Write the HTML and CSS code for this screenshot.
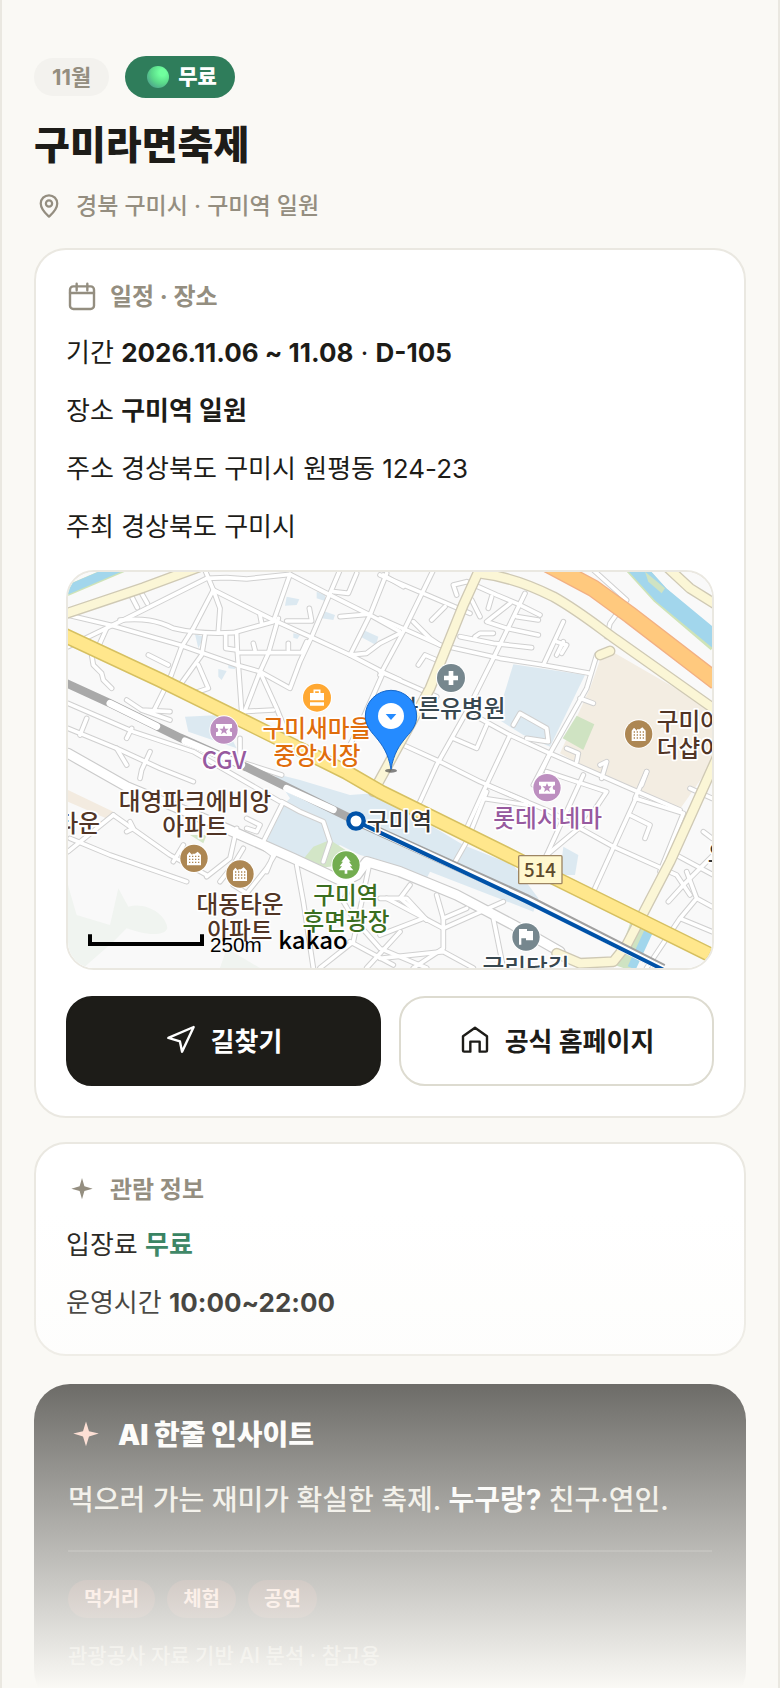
FILE: index.html
```html
<!DOCTYPE html>
<html lang="ko">
<head>
  <meta charset="UTF-8">
  <title>구미라면축제</title>
  <meta name="viewport" content="width=device-width, initial-scale=1.0">
  <link rel="stylesheet" href="styles.css">
</head>
<body>
  <main class="frame">
    <header class="head">
      <div class="badges">
        <span class="badge-month">11월</span>
        <span class="badge-free"><i class="dot"></i>무료</span>
      </div>
      <h1>구미라면축제</h1>
      <p class="place">
        <svg class="icon" viewBox="0 0 24 24"><path d="M12 20.5c-1.600-1.500-6.600-5.600-6.600-10.500a6.600 6.600 0 0 1 13.200 0c0 4.900-5 9-6.600 10.500z"/><circle cx="12" cy="10" r="2.500"/></svg>
        경북 구미시 · 구미역 일원
      </p>
    </header>

    <section class="card">
      <h2 class="schedule">
        <svg class="icon" viewBox="0 0 24 24"><rect x="3" y="4" width="18" height="17" rx="2.500"/><path d="M3 9h18M8 2v5M16 2v5"/></svg>
        일정 · 장소
      </h2>
      <div class="rows">
        <p>기간 <b>2026.11.06 ~ 11.08</b> · <b>D-105</b></p>
        <p>장소 <b>구미역 일원</b></p>
        <p>주소 경상북도 구미시 원평동 124-23</p>
        <p>주최 경상북도 구미시</p>
      </div>

      <div class="map">
        <svg viewBox="24 21 1932 1188" preserveAspectRatio="xMidYMid slice" role="img" aria-label="구미역 주변 지도">
          <defs>
            <g id="lanes">
              <path d="M24 245L190 165L440 40L500 38L560 42L690 28"/>
              <path d="M24 150L150 180L360 240L530 300L600 320L690 370L720 290L755 215L840 15"/>
              <path d="M435 15L460 75L400 190L365 245L330 340L280 440"/>
              <path d="M460 75L640 165L750 215L870 270L970 322L1020 345"/>
              <path d="M460 75L480 130L475 200"/>
              <path d="M180 165C250 160 290 165 340 190C400 205 480 205 520 203L640 170L690 28L810 90L930 150L1020 200"/>
              <path d="M530 205L532 260L545 440L640 435M532 263H725L740 230"/>
              <path d="M140 190L115 245M95 270L100 300L125 325L130 345L155 370"/>
              <path d="M435 210L425 270L360 360M415 300L445 370L400 385"/>
              <path d="M655 160L625 265L600 320L550 450M600 320L650 430L690 530"/>
              <path d="M980 25L930 150L870 270L920 265L960 235L1020 205M840 155L920 148"/>
              <path d="M970 322L900 480L860 560M970 30L1030 65M685 255V235M585 255L580 235M680 168H755L748 130"/>
              <path d="M215 95L232 128M245 85L262 115M265 270L325 300M497 210V250L530 255M600 150L605 175"/>
              <path d="M200 405L245 435L330 465M245 435L330 440M820 80L865 85L890 25"/>
              <path d="M24 415L220 500L400 560L660 710M80 460L60 510M215 490L200 520M24 490L170 550L300 610L400 650"/>
              <path d="M170 550L200 600M270 560L245 615L240 640M540 520L540 590L665 630"/>
              <!-- north-east blocks -->
              <path d="M960 30L1090 85L1230 145M1120 15L1030 200L960 330M960 160L1140 240L1320 280L1450 300L1590 325"/>
              <path d="M1395 85L1300 280L1220 440L1130 600L1080 710M1510 170L1450 300"/>
              <path d="M1190 90L1180 60L1220 50L1310 90L1370 115L1440 150M1350 115L1280 170L1340 190L1435 210"/>
              <path d="M1370 155L1435 165M1200 215L1300 235L1415 248M1245 215L1260 205H1300M1285 130L1295 95M1260 155L1235 105"/>
              <path d="M1115 165L1155 125M960 320L1130 395M1250 455L1350 510L1470 565L1710 670L1860 735M1030 540L1140 590L1260 650L1400 710"/>
              <path d="M1350 510L1270 680L1220 790M1470 565L1420 660M1180 520L1250 550L1280 480"/>
              <path d="M1610 270L1580 370L1470 565L1430 650M1560 400L1600 415M1600 15L1700 105L1650 175L1640 215"/>
              <path d="M1505 265L1520 240L1490 230M1490 270L1510 230M1360 480L1380 445L1460 490L1465 530L1400 520"/>
              <path d="M1520 550L1555 565L1550 590M1620 600L1640 590L1625 640M1760 620L1745 660M1075 300L1095 270L1130 285M1060 170L1110 220L1140 240"/>
              <!-- south-east blocks -->
              <path d="M1280 680L1220 830L1180 900M1460 620L1640 680L1580 770L1460 870M1270 700L1400 720"/>
              <path d="M1280 660L1470 740L1660 845L1850 930L1890 990M1570 630L1460 870M1730 695L1600 980"/>
              <path d="M1760 620L1725 700L1870 745M1710 750L1770 780L1755 820M1870 745L1800 920M1830 860L1960 930"/>
              <path d="M1960 870L1875 955L1825 1010M1880 920L1910 1000L1860 1060L1760 1209M1910 1000L1956 1025M1860 1060L1956 1100M1890 670L1956 700M1930 800L1956 820"/>
              <!-- south of the station -->
              <path d="M665 710L720 740L790 770L810 830L790 890M665 720L610 830M530 790L510 880L440 935"/>
              <path d="M650 860L620 910L560 985L520 960M600 840L640 870L620 920M160 750L330 870L440 930"/>
              <path d="M370 840L340 890M550 850L520 900L480 950M24 860L160 750M30 820L150 870L380 950M210 770L220 790L200 800"/>
              <path d="M710 900L730 1010L760 1209M880 940L850 1010L880 1060L960 1150L1100 1209M960 1000L1040 1000L1100 1065"/>
              <path d="M930 890L880 1130L780 1209M1020 1100L920 1209M870 1130L1000 1200M980 1000L1150 1090L1330 1010"/>
              <path d="M1050 960L1020 1000L1100 1065M1130 990L1150 1060V1150L1060 1209M960 1110L1090 1060M1300 1060L1330 1209"/>
              <path d="M960 1180L1150 1160L1240 1209M1220 1030L1150 1060M560 760L600 780L590 800L560 790"/>
            </g>
            <g id="avenues">
              <path d="M24 565L200 665L440 765L700 880L850 950"/>
              <path d="M850 950L890 930L920 890L1020 920L1190 990L1360 1080L1500 1160"/>
            </g>
            <g id="local">
              <path d="M0 152L250 68L420 5"/>
              <path d="M1260 10L1210 120L1110 370L940 680"/>
              <path d="M1260 25C1350 35 1430 70 1480 95C1560 140 1620 190 1670 225L1960 430"/>
              <path d="M1820 5L1890 70L1970 120"/>
              <path d="M1970 580L1830 890L1700 1140L1660 1190L1560 1195L1490 1165"/>
              <path d="M1620 270L1650 258"/>
            </g>
            <g id="building">
              <circle r="44" fill="#fff"/><circle r="41" fill="#ad8753"/>
              <path d="M-21 21V-10L-14-19L-5-10V-14H3L11-20L21-10V21Z" fill="#fff"/>
              <path d="M-15-6H17M-15 3H17M-15 12H17" stroke="#ad8753" stroke-width="4" stroke-dasharray="4 5"/>
            </g>
            <g id="cinema">
              <circle r="44" fill="#fff"/><circle r="41" fill="#bd8fc0"/>
              <path d="M-24-18H24V-7A7 7 0 0 0 24 7V18H-24V7A7 7 0 0 0-24-7Z" fill="#fff"/>
              <path d="M0-14L4-4L14-4L6 3L9 13L0 7L-9 13L-6 3L-14-4L-4-4Z" fill="#bd8fc0"/>
            </g>
          </defs>

          <rect x="0" y="0" width="1980" height="1230" fill="#f9f9f9"/>

          <!-- parks, water, blocks -->
          <path d="M24 960L50 1050L150 1080L175 970L205 1025C260 1010 320 1050 322 1090C310 1120 240 1105 200 1090L160 1130L70 1209H24Z" fill="#f0f4f0"/>
          <path d="M500 1150L600 1209H480Z" fill="#f0f4f0"/>
          <path d="M24 675L160 740L150 765L24 710Z" fill="#f3ebe0"/>
          <path d="M1620 285L1660 262L1960 435V590L1860 732L1680 665L1500 565L1590 370Z" fill="#f3ede2"/>
          <path d="M1550 452L1603 478L1570 555L1508 520Z" fill="#cfe3c2"/>
          <g fill="#dce9f1">
            <path d="M1360 298L1575 330L1470 545L1390 510L1310 460Z"/>
            <path d="M640 625L720 645L870 690L940 685L1110 780L1210 840L1360 900L1435 1000L1420 1040L1110 920L1100 940L960 885L900 870L840 840L780 890L690 870L620 830L660 730L690 700Z"/>
            <path d="M375 455L480 450L530 550L385 500Z"/>
            <path d="M680 95L718 103L710 120L675 122ZM770 80L795 90V108L770 100ZM790 138L825 150L820 165L785 160ZM910 195L955 215L948 240L902 215ZM405 208L432 215L415 250ZM475 312L500 318L485 345L475 335ZM505 298L525 302V312L505 310ZM700 205L720 210L712 222L700 218Z"/>
            <path d="M1510 845L1555 870L1545 930L1500 930Z"/>
          </g>
          <path d="M720 895L760 845L810 825L880 870L900 920L840 900L780 910Z" fill="#d3e6c7"/>
          <path d="M390 810H440L430 835Z" fill="#d3e6c7"/>
          <path d="M0 86L190 5" stroke="#cfe3b8" stroke-width="32"/>
          <path d="M0 84L190 3" stroke="#a2d6ec" stroke-width="27"/>
          <path d="M1718 0L1800 90L1970 235" stroke="#cfe3b8" stroke-width="54" fill="none"/>
          <path d="M1722 0L1804 90L1974 230" stroke="#a2d6ec" stroke-width="50" fill="none"/>
          <path d="M1755 20L1815 70L1805 85L1765 50Z" fill="#cfe3c2"/>
          <path d="M1735 1080L1690 1209" stroke="#cfe3c2" stroke-width="50"/>
          <path d="M1770 1090L1715 1209" stroke="#a2d6ec" stroke-width="26"/>

          <!-- roads -->
          <use href="#lanes" class="lane-edge"/>
          <use href="#avenues" class="avenue-edge"/>
          <use href="#lanes" class="lane"/>
          <use href="#avenues" class="avenue"/>
          <use href="#local" class="local-edge"/>
          <use href="#local" class="local"/>
          <g fill="none">
            <path d="M1450-10L1600 70L1710 150L1970 350" stroke="#f2b083" stroke-width="54"/>
            <path d="M1450-10L1600 70L1710 150L1970 350" stroke="#ffc97e" stroke-width="46"/>
            <path d="M0 205L300 345L560 473L860 622L960 680L1375 885L1970 1179" stroke="#d6c061" stroke-width="46"/>
            <path d="M0 205L300 345L560 473L860 622L960 680L1375 885L1970 1179" stroke="#ffe78c" stroke-width="37"/>
            <path d="M0 346L150 415L360 518L560 607L888 768" stroke="#a9a9a9" stroke-width="25"/>
            <path d="M150 415L290 484M375 528L545 600M680 670L820 734" stroke="#fff" stroke-width="21" stroke-linecap="round"/>
            <path d="M888 768L1400 1000L1810 1209" stroke="#a0a0a0" stroke-width="26"/>
            <path d="M888 768L1400 1004L1810 1213" stroke="#fff" stroke-width="20"/>
            <path d="M888 768L960 803L1400 1010L1810 1214" stroke="#0052a8" stroke-width="12"/>
          </g>

          <!-- places -->
          <g transform="translate(771 398)"><circle r="45" fill="#fff"/><circle r="42" fill="#ffa832"/><path d="M-21-14H21V8H-21ZM-21 14H21V24H-21Z" fill="#fff"/><path d="M-8-14V-22H8V-14" fill="none" stroke="#fff" stroke-width="5"/></g>
          <use href="#cinema" x="492" y="495"/>
          <use href="#cinema" x="1461" y="668"/>
          <use href="#building" x="1736" y="507"/>
          <use href="#building" x="402" y="880"/>
          <use href="#building" x="540" y="927"/>
          <g transform="translate(1173 339)"><circle r="45" fill="#fff"/><circle r="42" fill="#76878e"/><path d="M-7-21H7V-7H21V7H7V21H-7V7H-21V-7H-7Z" fill="#fff"/></g>
          <g transform="translate(858 900)"><circle r="44" fill="#fff"/><circle r="41" fill="#73ad50"/><path d="M0-28L14-10H9L19 4H12L22 16H4V26H-4V16H-22L-12 4H-19L-9-10H-14Z" fill="#fff"/></g>
          <g transform="translate(1398 1116)"><circle r="44" fill="#fff"/><circle r="41" fill="#76878e"/><path d="M-21-24H3V-18H21V10H0V4H-14V23H-21Z" fill="#fff"/></g>
          <rect x="1376" y="872" width="130" height="84" rx="3" fill="#fff8cf" stroke="#9d8563" stroke-width="4"/>

          <g class="label" text-anchor="middle">
            <g fill="#e06d0c"><text x="771" y="517">구미새마을</text><text x="771" y="597">중앙시장</text></g>
            <g fill="#975a9f"><text x="492" y="613">CGV</text><text x="1463" y="787">롯데시네마</text></g>
            <g fill="#37474f"><text x="1173" y="455">바른유병원</text><text x="1398" y="1233">금리단길</text></g>
            <g fill="#513526"><text x="405" y="734">대영파크에비앙</text><text x="405" y="811">아파트</text><text x="540" y="1043">대동타운</text><text x="540" y="1121">아파트</text></g>
            <g fill="#3b6e20"><text x="858" y="1016">구미역</text><text x="858" y="1095">후면광장</text></g>
            <text x="1440" y="935" class="route">514</text>
          </g>
          <g class="label" fill="#513526"><text x="1790" y="496">구미아</text><text x="1790" y="576">더샵아</text><text x="120" y="800" text-anchor="end">타운</text></g>
          <g class="label" fill="#333"><text x="920" y="796">구미역</text><text x="1943" y="890">오</text></g>
          <circle cx="888" cy="768" r="23" fill="#fff" stroke="#0052a8" stroke-width="13"/>

          <!-- marker -->
          <ellipse cx="993" cy="617" rx="18" ry="6" fill="#333" opacity=".6"/>
          <path d="M993 613C985 565 967 540 947 516C927 494 916 477 916 453A77 77 0 0 1 1070 453C1070 477 1059 494 1039 516C1019 540 1001 565 993 613Z" fill="#258bff" stroke="#1767c8" stroke-width="3"/>
          <circle cx="993" cy="453" r="39" fill="#fff"/>
          <path d="M977 447H1009L993 465Z" fill="#258bff"/>

          <path d="M90 1108V1137H426V1108" fill="none" stroke="#000" stroke-width="12"/>
          <text x="450" y="1160" class="scale">250m</text>
          <text x="655" y="1153" class="kakao">kakao</text>
        </svg>
      </div>

      <div class="actions">
        <a href="#directions" class="btn btn-dark">
          <svg class="icon" viewBox="0 0 24 24"><path d="M21.500 3L2.500 11.200l8.700 2.600 1.600 7.700z"/></svg>
          길찾기
        </a>
        <a href="#homepage" class="btn">
          <svg class="icon" viewBox="0 0 24 24"><path d="M3 10l9-6.500 9 6.500v10.500a1 1 0 0 1-1 1h-4.500V14h-7v7.500H4a1 1 0 0 1-1-1z"/></svg>
          공식 홈페이지
        </a>
      </div>
    </section>

    <section class="card">
      <h2>
        <svg class="icon star" viewBox="0 0 24 24"><path d="M12 3l1.800 6.200L20 11l-6.200 1.800L12 19l-1.800-6.200L4 11l6.200-1.800z"/></svg>
        관람 정보
      </h2>
      <div class="rows">
        <p>입장료 <b class="free">무료</b></p>
        <p>운영시간 <b>10:00~22:00</b></p>
      </div>
    </section>

    <section class="insight">
      <h2>
        <svg class="icon star" viewBox="0 0 24 24"><path d="M12 3l2 6.500L20.500 11l-6.500 2L12 19.500l-2-6.500-6.500-2L10 9.500z"/></svg>
        AI 한줄 인사이트
      </h2>
      <p class="summary">먹으러 가는 재미가 확실한 축제. <b>누구랑?</b> 친구·연인.</p>
      <div class="tags">
        <span>먹거리</span>
        <span>체험</span>
        <span>공연</span>
      </div>
      <p class="source">관광공사 자료 기반 AI 분석 · 참고용</p>
    </section>

    <div class="fade"></div>
  </main>
</body>
</html>
```

FILE: styles.css
```css
* {
  box-sizing: border-box;
}

body {
  margin: 0;
  background: #faf9f5;
  color: #1d1c18;
  font-family: Inter, "Noto Sans CJK KR", sans-serif;
  font-size: 26px;
  font-weight: 500;
}

h1, h2, p {
  margin: 0;
}

.frame {
  position: relative;
  height: 100vh;
  overflow: hidden;
  padding: 56px 32px 0;
  border: solid #eae8e1;
  border-width: 0 2px;
}

.icon {
  flex: none;
  width: 32px;
  height: 32px;
  fill: none;
  stroke: currentColor;
  stroke-width: 1.8;
  stroke-linecap: round;
  stroke-linejoin: round;
}

.star {
  fill: currentColor;
  stroke: none;
}

.badges {
  display: flex;
  align-items: center;
  gap: 16px;
  margin-bottom: 18px;
}

.badge-month {
  padding: 0 18px;
  border-radius: 19px;
  background: #f3f2ee;
  color: #948e80;
  font-size: 22px;
  font-weight: 700;
  line-height: 38px;
}

.badge-free {
  display: flex;
  align-items: center;
  gap: 9px;
  padding: 0 18px 0 22px;
  border-radius: 21px;
  background: #2f7d5b;
  color: #fff;
  font-size: 21px;
  font-weight: 800;
  line-height: 42px;
}

.dot {
  width: 22px;
  height: 22px;
  border-radius: 50%;
  background: radial-gradient(circle at 70% 30%, #70ff9e 15%, #5ad98a 50%, #4c9f8c 85%);
}

h1 {
  font-size: 39px;
  font-weight: 800;
  line-height: 58px;
}

.place {
  display: flex;
  align-items: center;
  gap: 12px;
  margin: 14px 0 24px;
  color: #948e80;
  font-size: 23px;
  line-height: 36px;
}

.place .icon {
  width: 30px;
  height: 30px;
}

.card {
  margin-bottom: 24px;
  padding: 28px 30px 30px;
  border: 2px solid #eae8e1;
  border-radius: 32px;
  background: #fff;
}

.card h2 {
  display: flex;
  align-items: center;
  gap: 12px;
  margin-bottom: 16px;
  color: #948e80;
  font-size: 24px;
  font-weight: 700;
  line-height: 36px;
}

.card .schedule {
  line-height: 38px;
}

.rows {
  display: flex;
  flex-direction: column;
  gap: 16px;
  font-weight: 400;
  line-height: 42px;
}

.free {
  color: #2f7d5b;
}

.map {
  margin: 22px 0 26px;
  border: 2px solid #eae8e1;
  border-radius: 28px;
  overflow: hidden;
}

.map svg {
  display: block;
  width: 100%;
}

.lane, .lane-edge, .avenue, .avenue-edge, .local, .local-edge {
  fill: none;
  stroke: #fff;
  stroke-width: 11;
  stroke-linecap: round;
  stroke-linejoin: round;
}

.lane-edge {
  stroke: #d0d0d0;
  stroke-width: 17;
}

.avenue {
  stroke-width: 27;
}

.avenue-edge {
  stroke: #cbcbcb;
  stroke-width: 34;
}

.local {
  stroke: #fbf6d6;
  stroke-width: 25;
}

.local-edge {
  stroke: #cfc9b4;
  stroke-width: 33;
}

.label {
  font-family: "Noto Sans CJK KR", sans-serif;
  font-size: 71px;
  font-weight: 500;
  stroke: #fff;
  stroke-width: 10;
  stroke-linejoin: round;
  paint-order: stroke;
}

.route {
  fill: #5e4b2c;
  stroke: none;
  font-size: 56px;
}

.scale {
  font-family: "Liberation Sans", sans-serif;
  font-size: 62px;
}

.kakao {
  font-family: "Noto Sans CJK KR", sans-serif;
  font-size: 72px;
  font-weight: 500;
}

.actions {
  display: grid;
  grid-template-columns: 1fr 1fr;
  gap: 18px;
}

.btn {
  display: flex;
  align-items: center;
  justify-content: center;
  gap: 14px;
  height: 90px;
  padding-bottom: 4px;
  border: 2px solid #dddbd0;
  border-radius: 26px;
  color: #1d1c18;
  font-size: 26px;
  font-weight: 700;
  text-decoration: none;
}

.btn-dark {
  border-color: #1d1c18;
  background: #1d1c18;
  color: #fff;
}

.insight {
  margin-top: 28px;
  padding: 32px 34px;
  border-radius: 36px;
  background: #1d1c18;
  color: #e9e6dd;
}

.insight h2 {
  display: flex;
  align-items: center;
  gap: 14px;
  margin-bottom: 22px;
  color: #fff;
  font-size: 28px;
  font-weight: 900;
  line-height: 38px;
}

.insight .star {
  width: 36px;
  height: 36px;
  color: #ffc9b8;
}

.summary {
  padding-bottom: 26px;
  border-bottom: 2px solid #3d3c38;
  font-size: 28px;
  line-height: 48px;
}

.summary b {
  color: #fff;
}

.tags {
  display: flex;
  gap: 12px;
  margin: 28px 0 20px;
}

.tags span {
  padding: 0 16px;
  border-radius: 19px;
  background: #4a2c25;
  color: #ffc9b8;
  font-size: 20px;
  font-weight: 700;
  line-height: 38px;
}

.source {
  color: #a8a498;
  font-size: 21px;
  line-height: 36px;
}

/* content fades out at the bottom of the preview */
.fade {
  position: absolute;
  right: -2px;
  bottom: 0;
  left: -2px;
  height: 476px;
  background: linear-gradient(rgba(250, 249, 245, 0), #faf9f5);
}
```
